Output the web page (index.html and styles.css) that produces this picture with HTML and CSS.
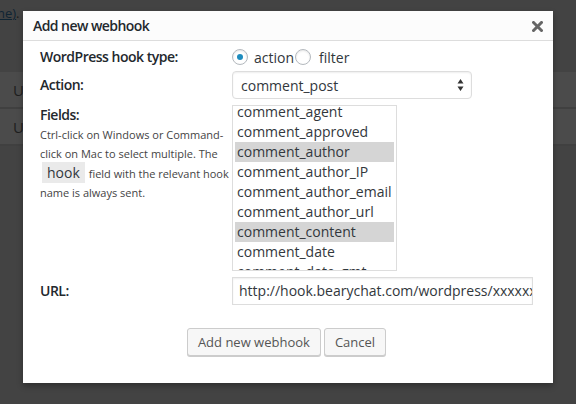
FILE: index.html
```html
<!DOCTYPE html>
<html>
<head>
<meta charset="utf-8">
<link rel="stylesheet" href="styles.css">
</head>
<body>
<div class="page">
  <div class="topline"><span class="lnk">ne)</span>.</div>
  <div class="rows">
    <div class="bgrow">U</div>
    <div class="bgrow">U</div>
  </div>
</div>
<div class="dialog">
  <div class="dhead">
    <div class="dtitle">Add new webhook</div>
    <svg class="close" width="11" height="11" viewBox="0 0 11 11"><path d="M1.5 1.5 L9.5 9.5 M9.5 1.5 L1.5 9.5" stroke="#666" stroke-width="3" stroke-linecap="square"/></svg>
  </div>
  <div class="dbody">
    <div class="frow r1">
      <div class="lab">WordPress hook type:</div>
      <div class="radios">
        <span class="radio on"></span><span class="rtext">action</span><span class="radio"></span><span class="rtext">filter</span>
      </div>
    </div>
    <div class="frow r2">
      <div class="lab">Action:</div>
      <div class="select">
        <span>comment_post</span>
        <svg class="arrows" width="7" height="14" viewBox="0 0 7 14"><path d="M3.5 1 L6.5 5.5 L0.5 5.5 Z M0.5 8.5 L6.5 8.5 L3.5 13 Z" fill="#333"/></svg>
      </div>
    </div>
    <div class="frow r3">
      <div class="labcol">
        <div class="lab">Fields:</div>
        <div class="help">Ctrl-click on Windows or Command-click on Mac to select multiple. The <code class="code">hook</code> field with the relevant hook name is always sent.</div>
      </div>
      <div class="list">
        <div class="opts">
          <div class="opt">comment_agent</div>
          <div class="opt">comment_approved</div>
          <div class="opt sel">comment_author</div>
          <div class="opt">comment_author_IP</div>
          <div class="opt">comment_author_email</div>
          <div class="opt">comment_author_url</div>
          <div class="opt sel">comment_content</div>
          <div class="opt">comment_date</div>
          <div class="opt">comment_date_gmt</div>
        </div>
      </div>
    </div>
    <div class="frow r4">
      <div class="lab">URL:</div>
      <div class="input"><span>http://hook.bearychat.com/wordpress/xxxxxxxxxx</span></div>
    </div>
    <div class="buttons">
      <div class="btn">Add new webhook</div>
      <div class="btn">Cancel</div>
    </div>
  </div>
</div>
</body>
</html>
```

FILE: styles.css
```css
html, body {
  margin: 0;
  padding: 0;
}
body {
  width: 576px;
  height: 404px;
  overflow: hidden;
  background: #434343;
  font-family: "Open Sans", "Liberation Sans", sans-serif;
  position: relative;
}
.page {
  color: #222;
}
.topline {
  height: 72px;
  font-size: 13px;
  line-height: 26px;
  color: #1b1b1b;
  margin-left: -3px;
}
.lnk {
  text-decoration: underline;
  color: #0f2433;
}
.rows {
  display: flex;
  flex-direction: column;
}
.bgrow {
  height: 35px;
  background: #4b4b4b;
  border-bottom: 2px solid #404040;
  font-size: 15px;
  line-height: 36px;
  padding-left: 13px;
  color: #1e1e1e;
}
.dialog {
  position: absolute;
  left: 23px;
  top: 11px;
  width: 530px;
  height: 372px;
  background: #fff;
  box-shadow: 0 3px 6px rgba(0,0,0,0.3);
}
.dhead {
  height: 29px;
  border-bottom: 1px solid #ddd;
  background: #fcfcfc;
  display: flex;
  align-items: center;
  justify-content: space-between;
  padding: 0 10px;
}
.dtitle {
  font-size: 14px;
  font-weight: 600;
  letter-spacing: -0.55px;
  color: #23282d;
}
.close {
  display: block;
  margin-top: 1px;
}
.dbody {
  padding: 7px 20px 0 17px;
}
.frow {
  display: grid;
  grid-template-columns: 192px 1fr;
}
.lab {
  font-size: 14px;
  font-weight: 600;
  letter-spacing: -0.5px;
  color: #23282d;
}
.r1 {
  height: 18px;
  margin-bottom: 5px;
}
.r1 .lab {
  line-height: 18px;
}
.radios {
  display: flex;
  align-items: center;
  height: 18px;
  font-size: 14px;
  color: #32373c;
}
.radio {
  width: 14px;
  height: 14px;
  border: 1px solid #b4b9be;
  border-radius: 50%;
  box-shadow: inset 0 1px 2px rgba(0,0,0,0.1);
  display: flex;
  align-items: center;
  justify-content: center;
  margin-right: 6px;
}
.radio.on::after {
  content: "";
  width: 6px;
  height: 6px;
  border-radius: 50%;
  background: #1e8cbe;
}
.rtext {
  margin-right: 1px;
}
.rtext + .radio {
  margin-right: 8px;
}
.r2 {
  margin-bottom: 6px;
}
.r2 .lab {
  line-height: 28px;
}
.select {
  height: 26px;
  border: 1px solid #ddd;
  border-radius: 4px;
  box-shadow: inset 0 1px 2px rgba(0,0,0,0.07);
  display: flex;
  align-items: center;
  justify-content: space-between;
  padding: 0 7px 0 8px;
  box-sizing: content-box;
  width: 223px;
  font-size: 14px;
  color: #32373c;
}
.arrows {
  display: block;
}
.r3 {
  margin-bottom: 6px;
}
.labcol .lab {
  line-height: 20px;
}
.help {
  width: 190px;
  font-size: 11px;
  line-height: 19px;
  color: #444;
}
.code {
  font-family: "Open Sans", "Liberation Sans", sans-serif;
  font-size: 14px;
  background: #eaeaea;
  padding: 1px 5px;
  margin: 0 1px 0 2px;
  color: #32373c;
}
.list {
  width: 159px;
  height: 164px;
  border: 1px solid #ddd;
  padding: 0 2px;
  overflow: hidden;
}
.opts {
  margin-top: -4px;
}
.opt {
  height: 20px;
  line-height: 20px;
  padding-left: 2px;
  font-size: 14px;
  color: #32373c;
  white-space: nowrap;
}
.opt.sel {
  background: #d5d5d5;
}
.r4 .lab {
  line-height: 28px;
}
.input {
  height: 26px;
  border: 1px solid #ddd;
  box-shadow: inset 0 1px 2px rgba(0,0,0,0.07);
  padding: 0 6px 0 6px;
  overflow: hidden;
  font-size: 14px;
  line-height: 26px;
  color: #32373c;
  white-space: nowrap;
}
.buttons {
  display: flex;
  justify-content: center;
  gap: 3px;
  margin-top: 23px;
}
.btn {
  height: 26px;
  line-height: 26px;
  padding: 0 10px;
  font-size: 13px;
  color: #555;
  background: #f7f7f7;
  border: 1px solid #ccc;
  border-radius: 3px;
  box-shadow: 0 1px 0 #ccc;
}
```
